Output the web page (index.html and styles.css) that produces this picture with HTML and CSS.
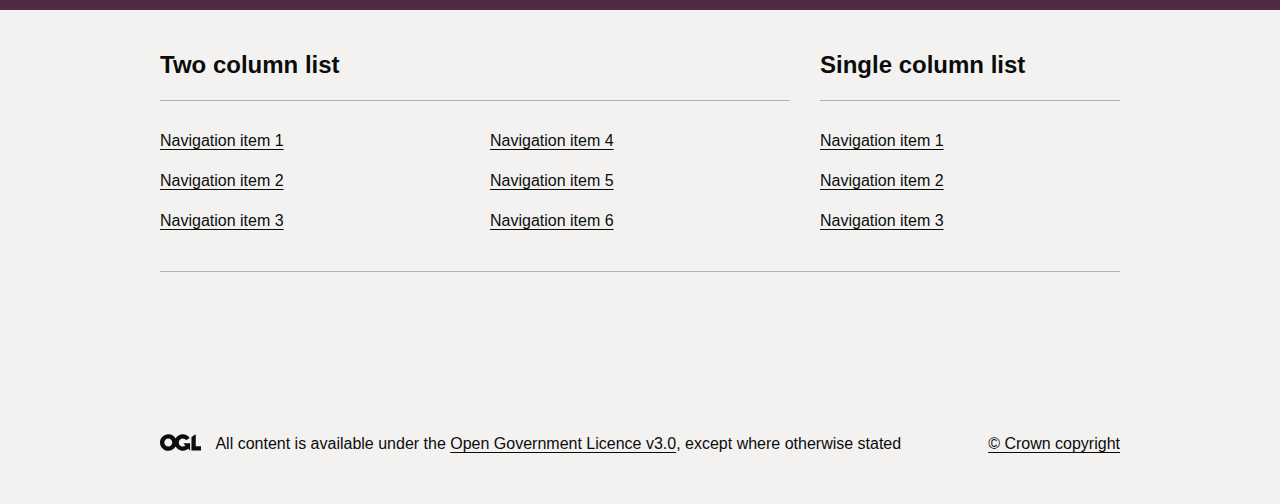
FILE: index.html
```html
<!DOCTYPE html>
<html lang="en">
<head>
<meta charset="utf-8">
<title>Footer</title>
<link rel="stylesheet" href="styles.css">
</head>
<body>
<footer class="footer">
  <div class="container">
    <div class="navigation">
      <section class="section section--wide">
        <h2 class="heading">Two column list</h2>
        <ul class="list list--columns">
          <li><a class="link" href="#">Navigation item 1</a></li>
          <li><a class="link" href="#">Navigation item 2</a></li>
          <li><a class="link" href="#">Navigation item 3</a></li>
          <li><a class="link" href="#">Navigation item 4</a></li>
          <li><a class="link" href="#">Navigation item 5</a></li>
          <li><a class="link" href="#">Navigation item 6</a></li>
        </ul>
      </section>
      <section class="section">
        <h2 class="heading">Single column list</h2>
        <ul class="list">
          <li><a class="link" href="#">Navigation item 1</a></li>
          <li><a class="link" href="#">Navigation item 2</a></li>
          <li><a class="link" href="#">Navigation item 3</a></li>
        </ul>
      </section>
    </div>
    <hr class="break">
    <div class="meta">
      <div class="licence">
        <svg class="licence-logo" aria-hidden="true" xmlns="http://www.w3.org/2000/svg" viewBox="0 0 483.2 195.7" height="17" width="41"><path fill="currentColor" d="M421.5 142.8V.1l-50.7 32.3v161.1h112.4v-50.7zm-122.3-9.6A47.12 47.12 0 0 1 221 97.8c0-26 21.1-47.1 47.1-47.1 16.7 0 31.4 8.7 39.7 21.8l42.7-27.2A97.63 97.63 0 0 0 268.1 0c-36.5 0-68.3 20.1-85.1 49.7A98 98 0 0 0 97.8 0C43.9 0 0 43.9 0 97.8s43.9 97.8 97.8 97.8c36.5 0 68.3-20.1 85.1-49.7a97.76 97.76 0 0 0 149.6 25.4l19.4 22.2h3v-87.8h-80l24.3 27.5zM97.8 145c-26 0-47.1-21.1-47.1-47.1s21.1-47.1 47.1-47.1 47.1 21.1 47.1 47.1S123.8 145 97.8 145"/></svg>
        <span>All content is available under the <a class="link" href="#">Open Government Licence v3.0</a>, except where otherwise stated</span>
      </div>
      <a class="link" href="#">© Crown copyright</a>
    </div>
  </div>
</footer>
</body>
</html>
```
FILE: styles.css
```css
body {
  margin: 0;
  background: #f3f2f1;
  color: #0b0c0c;
  font: 16px/20px Arial, "Liberation Sans", sans-serif;
  -webkit-font-smoothing: antialiased;
}

.footer {
  border-top: 10px solid #532a45;
  padding-top: 40px;
}

.container {
  width: 960px;
  margin: 0 auto;
}

.navigation {
  display: grid;
  grid-template-columns: 630px 300px;
  gap: 30px;
}

.heading {
  margin: 0 0 30px;
  padding-bottom: 20px;
  border-bottom: 1px solid #b1b4b6;
  font-size: 24px;
  line-height: 30px;
}

.list {
  display: grid;
  gap: 20px 30px;
  margin: 0;
  padding: 0;
  list-style: none;
}

.list--columns {
  grid-template: repeat(3, 20px) / 1fr 1fr;
  grid-auto-flow: column;
}

.link {
  color: inherit;
  text-decoration: underline;
  text-decoration-thickness: 1px;
  text-underline-offset: 0.1578em;
}

.break {
  margin: 40px 0 0;
  border: 0;
  border-top: 1px solid #b1b4b6;
}

.meta {
  display: flex;
  justify-content: space-between;
  padding-top: 162px;
}

.licence {
  display: flex;
}

.licence-logo {
  margin-right: 14.45px;
}
```
